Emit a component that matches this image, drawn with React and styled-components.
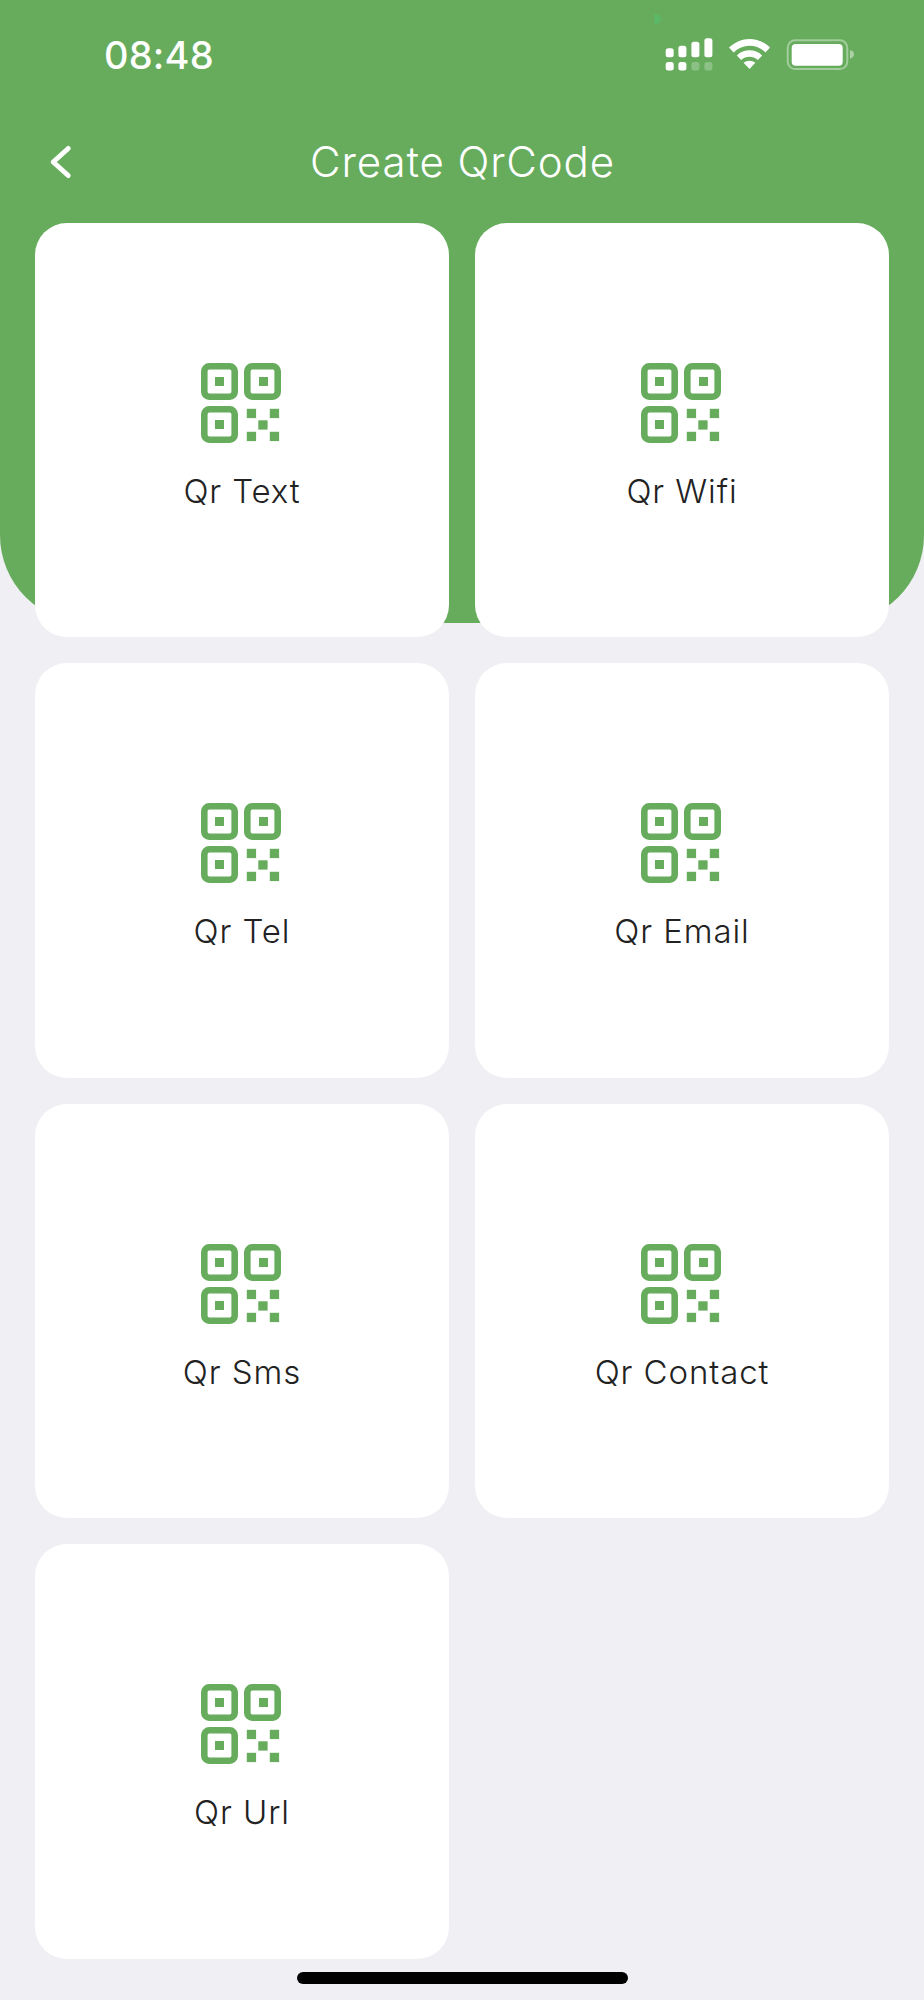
import styled, { createGlobalStyle } from "styled-components"

const GlobalStyle = createGlobalStyle`
  * {
    box-sizing: border-box;
  }

  html, body {
    margin: 0;
    padding: 0;
    background-color: #efeff4;
    font-family: "Inter", "Liberation Sans", sans-serif;
  }
`

const Screen = styled.div`
  width: 924px;
  height: 2000px;
  overflow: hidden;
  background-color: #efeff4;
`

const Header = styled.header`
  height: 623px;
  background-color: #66ac5c;
  border-radius: 0 0 88px 88px;
  color: white;
`

const StatusBar = styled.div`
  height: 130px;
  padding: 36px 0 0 104px;
  display: flex;
  justify-content: space-between;
  align-items: flex-start;
`

const Clock = styled.span`
  font-size: 38px;
  font-weight: 550;
  line-height: 38px;
  letter-spacing: 0.2px;
`

const StatusIcons = styled.svg`
  width: 270px;
  height: 74px;
  flex-shrink: 0;
  margin-top: -36px;
`

const NavBar = styled.nav`
  height: 64px;
  padding-left: 48px;
  display: flex;
  align-items: center;
`

const BackIcon = styled.svg`
  width: 26px;
  height: 36px;
`

const Title = styled.h1`
  margin: 0 0 0 236px;
  font-size: 42px;
  font-weight: 350;
  line-height: 48px;
  letter-spacing: 0.9px;
`

const CardGrid = styled.main`
  margin-top: -400px;
  padding: 0 35px;
  display: grid;
  grid-template-columns: repeat(2, 414px);
  grid-auto-rows: 414.4px;
  gap: 26px;
`

const Card = styled.button`
  padding: 140px 0 0;
  border: none;
  border-radius: 32px;
  background-color: white;
  display: flex;
  flex-direction: column;
  align-items: center;
  font-family: inherit;
`

const QrIcon = styled.svg`
  width: 80px;
  height: 80px;
  margin-right: 3px;
`

const CardLabel = styled.span`
  margin-top: 29px;
  font-size: 33px;
  font-weight: 350;
  line-height: 38px;
  letter-spacing: 0.9px;
  color: #222222;
`

const HomeIndicator = styled.div`
  width: 331px;
  height: 12px;
  margin: 13px auto 0 auto;
  border-radius: 6px;
  background-color: black;
`

const options = ["Qr Text", "Qr Wifi", "Qr Tel", "Qr Email", "Qr Sms", "Qr Contact", "Qr Url"]

const qrDots = [
  [45.8, 45.8],
  [68.8, 45.8],
  [57.3, 57.3],
  [45.8, 68.8],
  [68.8, 68.8],
]

function QrGlyph() {
  return (
    <QrIcon viewBox="0 0 80 80" fill="none">
      <g stroke="#66ac5c" strokeWidth="6.6">
        <rect x="3.3" y="3.3" width="30.4" height="30.4" rx="5" />
        <rect x="46.3" y="3.3" width="30.4" height="30.4" rx="5" />
        <rect x="3.3" y="46.3" width="30.4" height="30.4" rx="5" />
      </g>
      <g fill="#66ac5c">
        <rect x="14" y="14" width="9" height="9" />
        <rect x="58" y="14" width="9" height="9" />
        <rect x="14" y="57" width="9" height="9" />
        {qrDots.map(([x, y]) => (
          <rect key={`${x}-${y}`} x={x} y={y} width="9.3" height="9.3" />
        ))}
      </g>
    </QrIcon>
  )
}

// drawn in page px, the svg starts at x=654
function StatusGlyphs() {
  return (
    <StatusIcons viewBox="654 0 270 74" fill="none">
      <circle cx="656" cy="19" r="5" fill="#5cb866" />
      <g fill="white">
        <rect x="665.7" y="48.3" width="8" height="9" rx="2.5" />
        <rect x="678.4" y="45.7" width="8" height="11.6" rx="2.5" />
        <rect x="691.4" y="41.7" width="8" height="15.6" rx="2.5" />
        <rect x="704.4" y="38.3" width="8" height="19" rx="2.5" />
        <rect x="665.7" y="62" width="8" height="8.6" rx="2.5" />
        <rect x="678.4" y="62" width="8" height="8.6" rx="2.5" />
        <rect x="691.4" y="62" width="8" height="8.6" rx="2.5" opacity="0.25" />
        <rect x="704.4" y="62" width="8" height="8.6" rx="2.5" opacity="0.25" />
      </g>
      <g fill="white">
        <path d="M729 47.6 C740.5 36 758.5 36 770 47.6 L765.4 52.4 C756.4 43.4 742.6 43.4 733.6 52.4 Z" />
        <path d="M736.8 55.4 C744 48.6 755 48.6 762.2 55.4 L757.8 60 C753 55.6 746 55.6 741.2 60 Z" />
        <path d="M743.6 62.8 C747 60 752 60 755.4 62.8 L749.5 69 Z" />
      </g>
      <rect x="787.7" y="40.3" width="59.6" height="28.8" rx="7.5" stroke="white" strokeOpacity="0.4" strokeWidth="2" />
      <rect x="791.7" y="44" width="51" height="21.7" rx="4" fill="white" />
      <path d="M850 50 C852.6 50.6 854 52.2 854 54.3 C854 56.4 852.6 58 850 58.7 Z" fill="white" fillOpacity="0.45" />
    </StatusIcons>
  )
}

export default function App() {
  return (
    <Screen>
      <GlobalStyle />
      <Header>
        <StatusBar>
          <Clock>08:48</Clock>
          <StatusGlyphs />
        </StatusBar>
        <NavBar>
          <BackIcon viewBox="0 0 26 36" fill="none">
            <path d="M20.2 4.5 L5.2 18 L20.2 31.5" stroke="white" strokeWidth="5" strokeLinecap="round" strokeLinejoin="round" />
          </BackIcon>
          <Title>Create QrCode</Title>
        </NavBar>
      </Header>
      <CardGrid>
        {options.map((label) => (
          <Card key={label}>
            <QrGlyph />
            <CardLabel>{label}</CardLabel>
          </Card>
        ))}
      </CardGrid>
      <HomeIndicator />
    </Screen>
  )
}
